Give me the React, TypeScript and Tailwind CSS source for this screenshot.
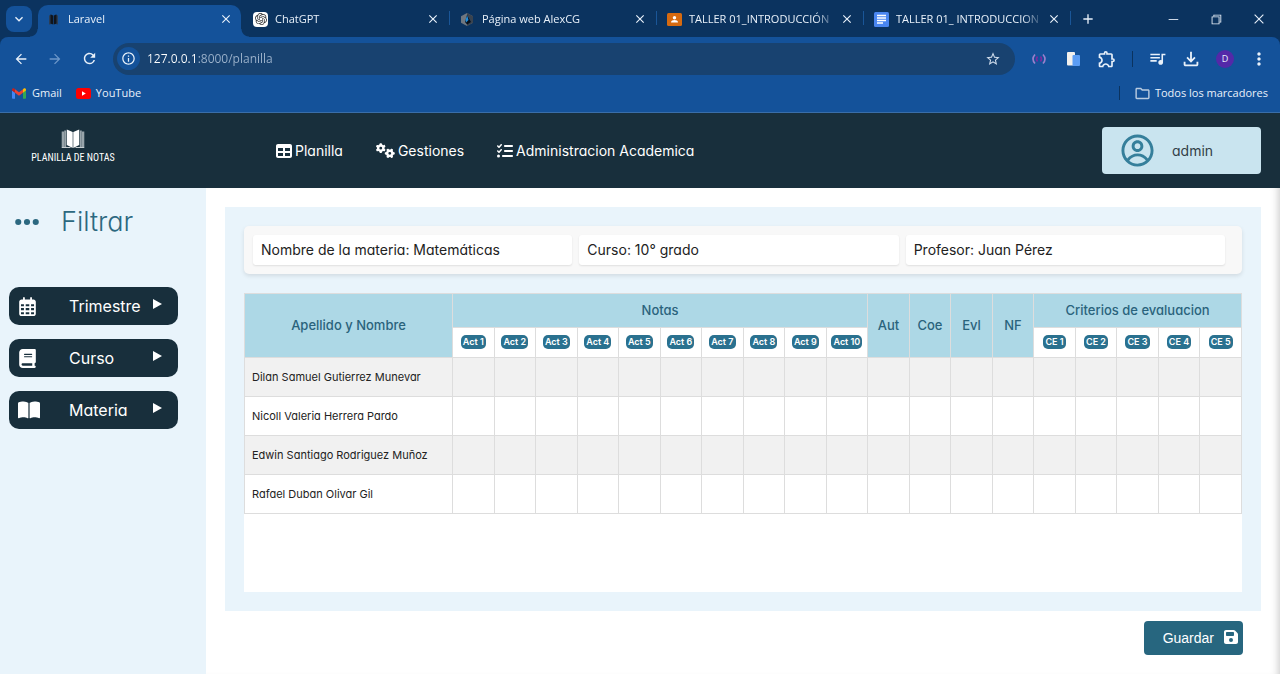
import React from "react";
import { FaBook, FaBookOpen, FaEllipsis, FaFloppyDisk, FaGears, FaListCheck, FaRegCalendarDays, FaTable } from "react-icons/fa6";
import {
  MdAdd,
  MdArrowBack,
  MdArrowForward,
  MdClose,
  MdExpandMore,
  MdInfoOutline,
  MdMoreVert,
  MdOutlineExtension,
  MdOutlineFileDownload,
  MdOutlineFolder,
  MdQueueMusic,
  MdRefresh,
  MdStarBorder,
} from "react-icons/md";
import { CgProfile } from "react-icons/cg";
import { SiOpenai } from "react-icons/si";
import { VscChromeClose, VscChromeMinimize, VscChromeRestore } from "react-icons/vsc";

const uiFont = "font-['Open_Sans','Noto_Sans',sans-serif]";
const pageFont = "font-['Inter','Open_Sans',sans-serif] [font-feature-settings:'cv11']";

function LaravelIcon() {
  return (
    <svg viewBox="0 0 15 15" className="size-[15px] shrink-0">
      <path d="M3 3.500 6 2.500v9.500l-3 .5zM12 3.500 9 2.500v9.500l3 .5z" fill="#2b3d55" />
      <path d="M4.500 2.500 7.200 3.500v9L4.500 11.500zM10.500 2.500 7.800 3.500v9l2.700-1z" fill="#10151c" />
    </svg>
  );
}

function ChatGptIcon() {
  return (
    <span className="flex size-[15px] shrink-0 items-center justify-center rounded-sm bg-white text-[#333]">
      <SiOpenai className="size-3" />
    </span>
  );
}

function AlexIcon() {
  return (
    <svg viewBox="0 0 15 15" className="size-[15px] shrink-0">
      <path d="M7 1 13 4.200v6.600L7 14 1 10.800V4.200z" fill="#6f7780" />
      <path d="M7 1 13 4.200v6.600L7 14z" fill="#39434f" />
      <path d="M7 3 11 10 7 12.500 5 10z" fill="#07101c" />
      <path d="M7.200 3.500 8.500 8 6 10.500 5.500 8z" fill="#1f8fe0" />
    </svg>
  );
}

function ClassroomIcon() {
  return (
    <svg viewBox="0 0 15 15" className="size-[15px] shrink-0">
      <rect y="1" width="15" height="13" rx="1.500" fill="#d66a10" />
      <circle cx="7.500" cy="5.800" r="1.700" fill="#fff" />
      <path d="M4 10.500c0-1.700 1.800-2.400 3.500-2.400s3.500.7 3.500 2.400z" fill="#fff" />
    </svg>
  );
}

function DocsIcon() {
  return (
    <svg viewBox="0 0 15 15" className="size-[15px] shrink-0">
      <rect width="15" height="15" rx="1.500" fill="#4a86f0" />
      <path d="M3 3.500h9M3 6h9M3 8.500h9M3 11h6" stroke="#fff" strokeWidth="1.400" />
    </svg>
  );
}

function GmailIcon() {
  return (
    <svg viewBox="0 0 14 11" className="h-[11px] w-[14px]">
      <path d="M0 2.500v7.500q0 .8.800.8H3V4.500z" fill="#4285f4" />
      <path d="M14 2.500v7.500q0 .8-.8.8H11V4.500z" fill="#34a853" />
      <path d="M11 1.200v3.600l3-2.300V1.700C14 .3 12.500-.2 11.500.7z" fill="#fbbc04" />
      <path d="M3 4.800V1.200l4 3 4-3v3.600l-4 3z" fill="#ea4335" />
      <path d="M0 1.700v.8l3 2.300V1.200L2.500.7C1.500-.2 0 .3 0 1.700z" fill="#c5221f" />
    </svg>
  );
}

function YouTubeIcon() {
  return (
    <svg viewBox="0 0 15 11" className="h-[11px] w-[15px]">
      <rect width="15" height="11" rx="2.500" fill="#f00" />
      <path d="M6 3.200v4.600l3.800-2.300z" fill="#fff" />
    </svg>
  );
}

function SignalIcon() {
  return (
    <svg viewBox="0 0 14 12" className="h-3 w-3.5" fill="none" strokeWidth="1.600">
      <path d="M3 1.500Q-1 6 3 10.500M11 1.500q4 4.500 0 9" stroke="#9a80cc" />
      <path d="M5.500 3.500Q3.500 6 5.500 8.500M8.500 3.500q2 2.500 0 5" stroke="#7a2aa0" />
    </svg>
  );
}

function PagesIcon() {
  return (
    <svg viewBox="0 0 13 14" className="h-3.5 w-[13px]">
      <rect width="8" height="13.500" rx="1" fill="#f3f1ee" />
      <rect x="5.500" y="3" width="7.500" height="11" rx="1" fill="#5b9df5" />
    </svg>
  );
}

function LogoBook() {
  return (
    <svg viewBox="0 0 24 20" className="h-5 w-6">
      <path d="M.7 2.500H3V18H.7zM21 2.500h2.300V18H21zM3.200 1.500h2V18h-2zM18.800 1.500h2V18h-2z" fill="#98a4aa" />
      <path d="M.7 18.500h8.800M23.300 18.500h-8.800" stroke="#c5cdd1" />
      <path d="M5.800.5 11.700 3v16l-5.900-3zM18.200.5 12.300 3v16l5.900-3z" fill="#fff" />
    </svg>
  );
}

const tabs = [
  { title: "Laravel", icon: <LaravelIcon />, active: true },
  { title: "ChatGPT", icon: <ChatGptIcon /> },
  { title: "Página web AlexCG", icon: <AlexIcon /> },
  { title: "TALLER 01_INTRODUCCIÓN", icon: <ClassroomIcon /> },
  { title: "TALLER 01_ INTRODUCCION", icon: <DocsIcon /> },
];

function TabStrip() {
  return (
    <div className="flex h-[37px] items-end bg-[#0b335f] pl-1.5">
      <button aria-label="Buscar pestañas" className="mb-[5px] mr-1 flex size-[26px] shrink-0 items-center justify-center rounded-lg bg-[#14529a]">
        <MdExpandMore className="size-4" />
      </button>
      {tabs.map((tab) => (
        <div key={tab.title} className="relative h-8 w-[207px] min-w-0 px-0.5">
          <div className={tab.active ? "flex h-full items-center rounded-t-[10px] bg-[#14529a] px-2 pb-1" : "flex h-full items-center px-2 pb-1"}>
            {tab.icon}
            <button className="ml-[7px] min-w-0 flex-1 overflow-hidden whitespace-nowrap text-left text-[11px] leading-4 [mask-image:linear-gradient(to_right,#000_86%,transparent_100%)]">
              {tab.title}
            </button>
            <button aria-label={`Cerrar ${tab.title}`} className="ml-1 shrink-0">
              <MdClose className="size-3.5" />
            </button>
          </div>
          {tab.active ? (
            <>
              <span className="absolute bottom-0 -left-1.5 size-2 bg-[radial-gradient(circle_at_0_0,transparent_7px,#14529a_8px)]" />
              <span className="absolute bottom-0 -right-1.5 size-2 bg-[radial-gradient(circle_at_100%_0,transparent_7px,#14529a_8px)]" />
            </>
          ) : (
            <span className="absolute right-0 top-1.5 h-3.5 w-px bg-[#1a5698]" />
          )}
        </div>
      ))}
      <button aria-label="Nueva pestaña" className="mb-2.5 ml-[9px] shrink-0">
        <MdAdd className="size-4" />
      </button>
      <div className="mb-[11px] ml-auto flex shrink-0 gap-[29px] pr-3.5">
        <button aria-label="Minimizar"><VscChromeMinimize className="size-3.5" /></button>
        <button aria-label="Restaurar"><VscChromeRestore className="size-3.5" /></button>
        <button aria-label="Cerrar"><VscChromeClose className="size-3.5" /></button>
      </div>
    </div>
  );
}

function ToolButton({ label, children, muted }: { label: string; children: React.ReactNode; muted?: boolean }) {
  return (
    <button aria-label={label} className={muted ? "flex size-8 shrink-0 items-center justify-center text-[#6c97c9]" : "flex size-8 shrink-0 items-center justify-center"}>
      {children}
    </button>
  );
}

function Toolbar() {
  return (
    <div className="bg-[#0b335f]">
      <div className="flex h-[43px] items-center gap-0.5 rounded-t-lg bg-[#14529a] px-[5px]">
        <ToolButton label="Atrás"><MdArrowBack className="size-4" /></ToolButton>
        <ToolButton label="Adelante" muted><MdArrowForward className="size-4" /></ToolButton>
        <ToolButton label="Recargar"><MdRefresh className="size-[17px]" /></ToolButton>
        <div className="ml-1.5 mr-1.5 flex h-8 min-w-0 flex-1 items-center rounded-full bg-[#184270] pl-1 pr-3.5">
          <button aria-label="Información del sitio" className="flex size-[23px] shrink-0 items-center justify-center rounded-full bg-[#14529a]">
            <MdInfoOutline className="size-[15px]" />
          </button>
          <input
            aria-label="Dirección"
            defaultValue="127.0.0.1:8000/planilla"
            className="ml-[7px] min-w-0 flex-1 bg-[linear-gradient(to_right,#ffffff_51px,#9db3cc_51px)] bg-clip-text text-[12px] leading-5 text-transparent outline-none"
          />
          <button aria-label="Marcar página" className="shrink-0"><MdStarBorder className="size-4 text-[#cfdceb]" /></button>
        </div>
        <ToolButton label="Señal"><SignalIcon /></ToolButton>
        <ToolButton label="Páginas"><PagesIcon /></ToolButton>
        <ToolButton label="Extensiones"><MdOutlineExtension className="size-5" /></ToolButton>
        <div className="flex w-3.5 justify-center"><span className="h-4 w-px bg-[#0b335f]" /></div>
        <ToolButton label="Controlar multimedia"><MdQueueMusic className="size-[19px]" /></ToolButton>
        <ToolButton label="Descargas"><MdOutlineFileDownload className="size-[22px]" /></ToolButton>
        <ToolButton label="Perfil">
          <span className="flex size-[18px] items-center justify-center rounded-full bg-[#5429a8] text-[9px]">D</span>
        </ToolButton>
        <ToolButton label="Menú"><MdMoreVert className="size-5" /></ToolButton>
      </div>
      <div className="flex h-[33px] items-center border-b border-[#3a6ea8] bg-[#14529a] px-3 pb-1.5 text-[11px]">
        <a href="#gmail" className="flex items-center gap-1.5"><GmailIcon />Gmail</a>
        <a href="#youtube" className="ml-3.5 flex items-center gap-[5px]"><YouTubeIcon />YouTube</a>
        <span className="ml-auto mr-[14px] h-3.5 w-px bg-[#0b335f]" />
        <button className="flex items-center gap-1"><MdOutlineFolder className="size-[17px] text-[#b9cbe0]" />Todos los marcadores</button>
      </div>
    </div>
  );
}

function AppHeader() {
  return (
    <header className="flex h-[75px] items-center bg-[#182f3c] pr-[19px] text-white">
      <div className="w-[276px] shrink-0 pb-2 pl-[33px]">
        <div className="flex w-20 flex-col items-center gap-0.5">
          <LogoBook />
          <span className="whitespace-nowrap font-['Liberation_Sans_Narrow','Roboto_Condensed','DejaVu_Sans_Condensed',sans-serif] text-[10px] leading-[14px]">PLANILLA DE NOTAS</span>
        </div>
      </div>
      <nav className="flex gap-[33px] text-sm">
        <a href="#planilla" className="flex items-center gap-[3px]"><FaTable className="size-4" />Planilla</a>
        <a href="#gestiones" className="flex items-center gap-[3px]"><FaGears className="size-[19px]" />Gestiones</a>
        <a href="#administracion" className="flex items-center gap-[3px]"><FaListCheck className="size-4" />Administracion Academica</a>
      </nav>
      <button className="ml-auto flex h-[47px] w-[159px] items-center gap-[17px] rounded bg-[#c9e4ef] pl-[18px] text-sm text-[#333f48]">
        <CgProfile className="size-[35px] text-[#357f9b]" />
        admin
      </button>
    </header>
  );
}

const filters = [
  { label: "Trimestre", icon: <FaRegCalendarDays className="size-[19px]" /> },
  { label: "Curso", icon: <FaBook className="size-[19px]" /> },
  { label: "Materia", icon: <FaBookOpen className="size-[22px]" /> },
];

function Sidebar() {
  return (
    <aside className="w-[206px] shrink-0 bg-[#e9f4fb] pl-[9px] pr-7 pt-4">
      <div className="flex items-center gap-5 pl-1 text-[#2c6880]">
        <FaEllipsis className="size-7" />
        <h1 className="text-[27px] font-light leading-9">Filtrar</h1>
      </div>
      <div className="mt-[47px] flex flex-col gap-3.5">
        {filters.map((f) => (
          <button key={f.label} className="flex h-[38px] items-center rounded-[10px] bg-[#182f3c] pl-[9px] pr-4 text-base text-white">
            <span className="w-[51px]">{f.icon}</span>
            {f.label}
            <svg viewBox="0 0 9 10" className="mb-1 ml-auto h-2.5 w-[9px]" fill="#fff"><path d="M0 0v10l9-5z" /></svg>
          </button>
        ))}
      </div>
    </aside>
  );
}

const info = ["Nombre de la materia: Matemáticas", "Curso: 10° grado", "Profesor: Juan Pérez"];
const acts = Array.from({ length: 10 }, (_, i) => `Act ${i + 1}`);
const criteria = Array.from({ length: 5 }, (_, i) => `CE ${i + 1}`);
const summary = ["Aut", "Coe", "Evl", "NF"];
const students = ["Dilan Samuel Gutierrez Munevar", "Nicoll Valeria Herrera Pardo", "Edwin Santiago Rodriguez Muñoz", "Rafael Duban Olivar Gil"];

function Badge({ text }: { text: string }) {
  return (
    <th className="border border-[#ddd] bg-white p-0 pb-[3px] text-center leading-[14px]">
      <button className="whitespace-nowrap rounded-[5px] bg-[#2a718f] px-[2px] text-[9px] font-semibold leading-[14px] text-white">{text}</button>
    </th>
  );
}

function GradesTable() {
  const head = "border border-[#ddd] bg-[#add8e6] p-0 font-medium text-[#2a637c]";
  return (
    <table className="w-full table-fixed border-collapse text-xs">
      <colgroup>
        <col className="w-[208px]" />
        {Array.from({ length: 19 }, (_, i) => <col key={i} />)}
      </colgroup>
      <thead className="text-[13px]">
        <tr className="h-[34px]">
          <th rowSpan={2} className={head}>Apellido y Nombre</th>
          <th colSpan={10} className={head}>Notas</th>
          {summary.map((s) => <th key={s} rowSpan={2} className={head}>{s}</th>)}
          <th colSpan={5} className={head}>Criterios de evaluacion</th>
        </tr>
        <tr className="h-[30px]">
          {acts.map((a) => <Badge key={a} text={a} />)}
          {criteria.map((c) => <Badge key={c} text={c} />)}
        </tr>
      </thead>
      <tbody>
        {students.map((s) => (
          <tr key={s} className="h-[39px] odd:bg-[#f1f1f1] even:bg-white">
            <td className="whitespace-nowrap border border-[#ddd] px-[7px] py-0 text-[11px] text-[#222]">{s}</td>
            {Array.from({ length: 19 }, (_, i) => <td key={i} className="border border-[#ddd] p-0" />)}
          </tr>
        ))}
      </tbody>
    </table>
  );
}

export default function App() {
  return (
    <div className="flex min-h-screen flex-col bg-white">
      <div className={`${uiFont} text-[#e9f1fa]`}>
        <TabStrip />
        <Toolbar />
      </div>
      <div className={`${pageFont} flex flex-1 flex-col`}>
        <AppHeader />
        <div className="flex flex-1">
          <Sidebar />
          <main className="min-w-0 flex-1 px-[19px] pt-[19px] shadow-[inset_-8px_0_8px_-7px_#c4c4c4]">
            <section className="bg-[#e9f4fb] p-[19px]">
              <div className="flex gap-[7px] rounded-[5px] bg-[#f8f8f8] py-[9px] pl-[9px] pr-[17px] shadow-[0_2px_4px_rgba(0,0,0,0.1)]">
                {info.map((t) => (
                  <div key={t} className="flex-1 rounded-[3px] bg-white px-2 py-[5px] text-sm leading-5 text-[#222] shadow-[0_1px_2px_rgba(0,0,0,0.1)]">{t}</div>
                ))}
              </div>
              <div className="mt-[19px] min-h-[299px] bg-white">
                <GradesTable />
              </div>
            </section>
            <div className="flex justify-end py-[10px] pr-[18px]">
              <button className="flex h-[34px] items-center gap-[9px] rounded bg-[#27667f] pl-[19px] pr-1 font-['Liberation_Sans',Arial,sans-serif] text-sm text-white">
                Guardar
                <FaFloppyDisk className="mb-0.5 size-4" />
              </button>
            </div>
          </main>
        </div>
      </div>
    </div>
  );
}
